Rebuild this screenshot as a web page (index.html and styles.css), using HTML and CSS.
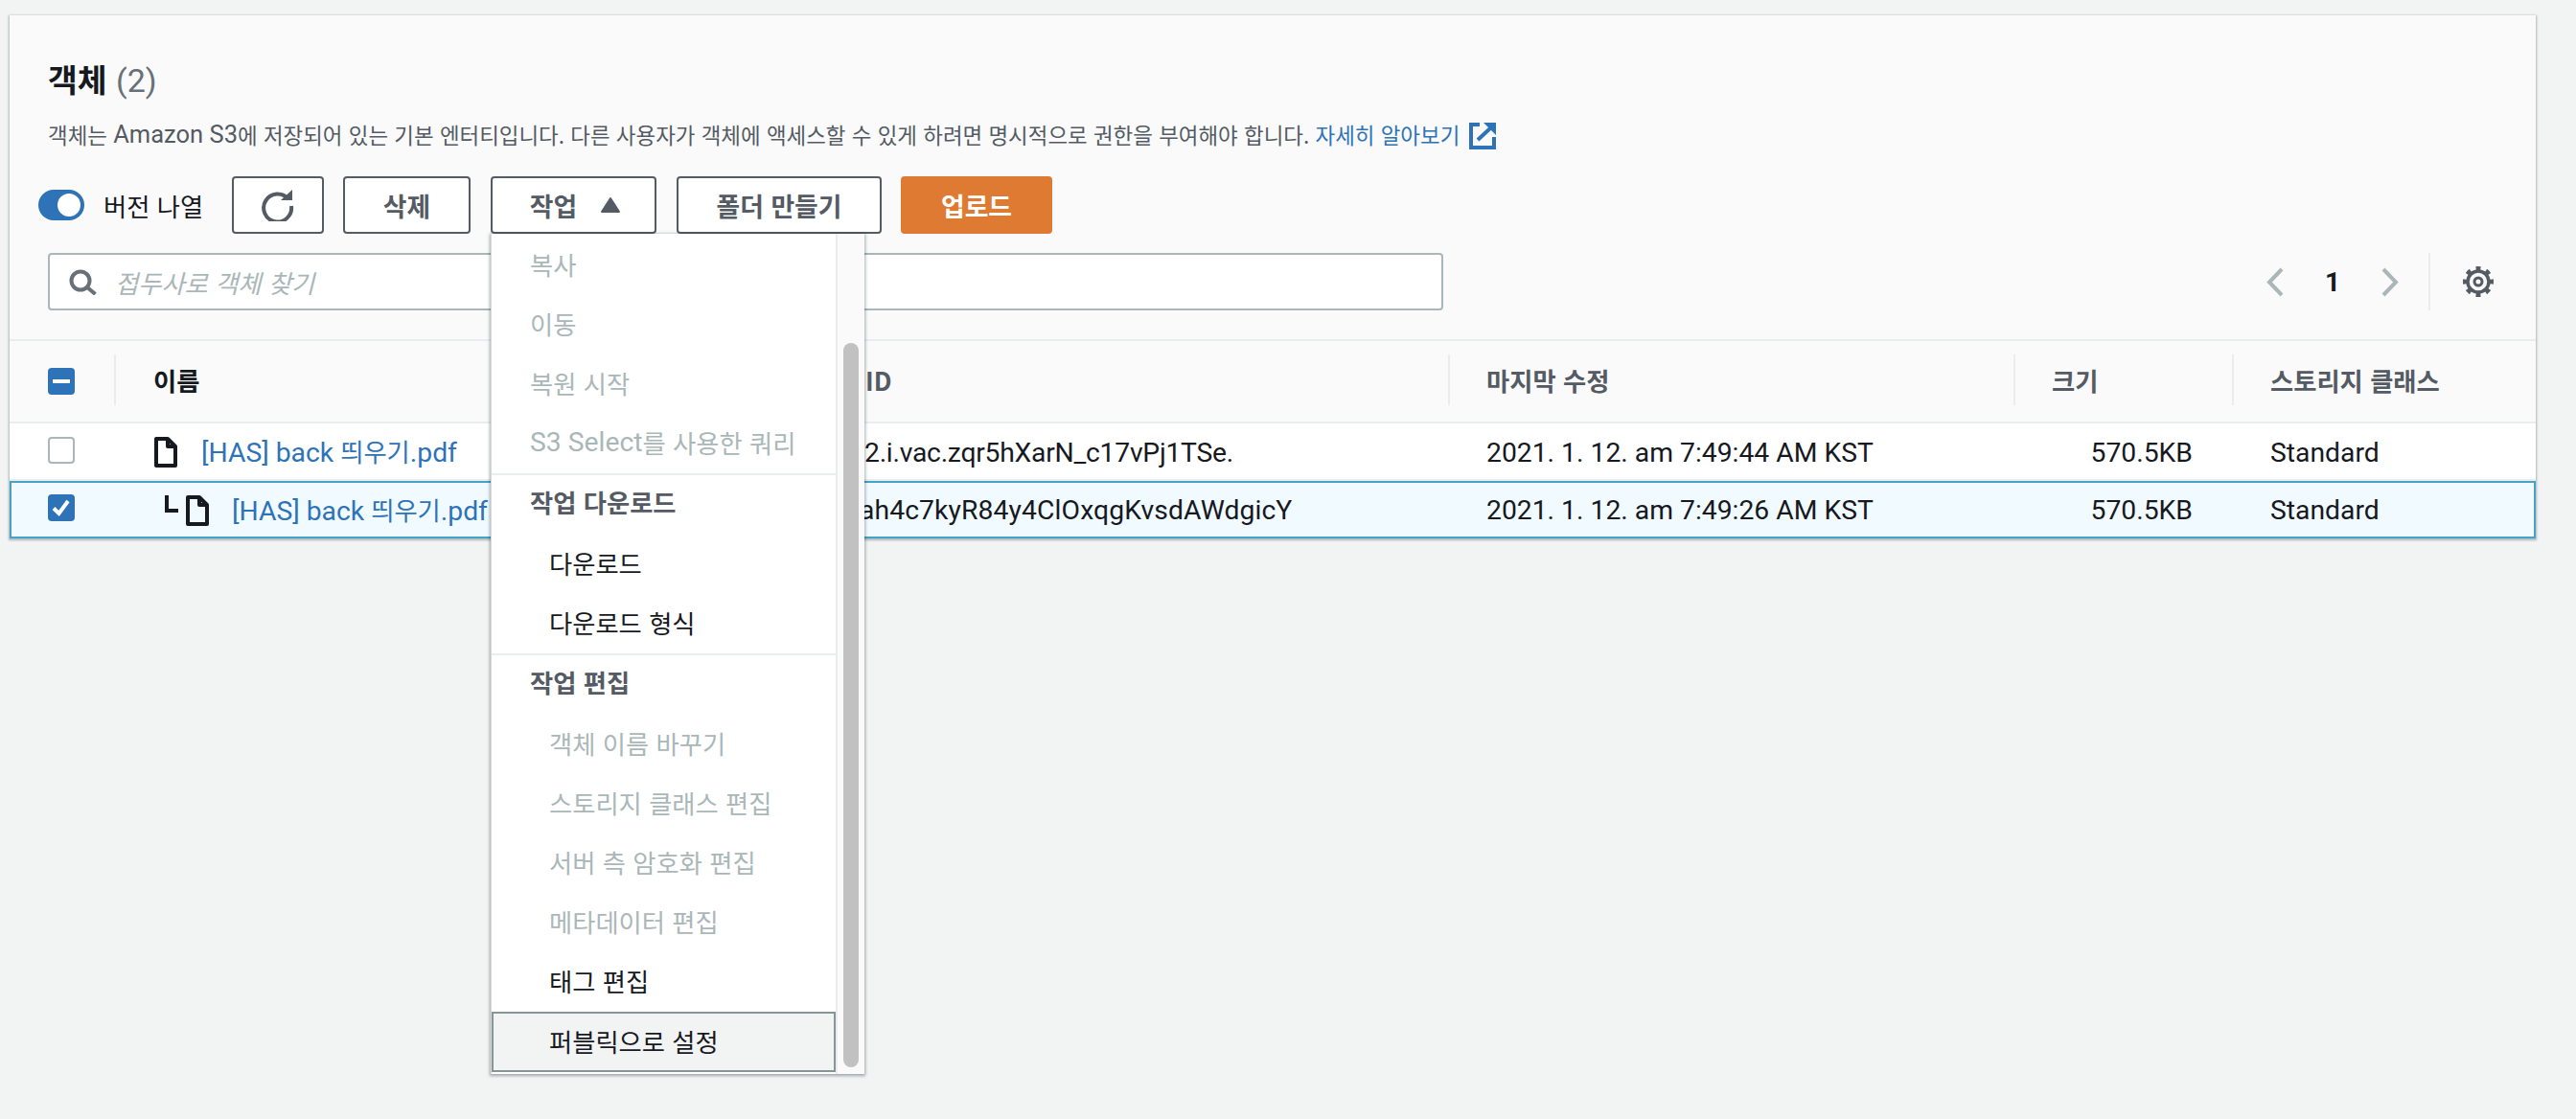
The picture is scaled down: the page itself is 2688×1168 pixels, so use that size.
FILE: index.html
```html
<!DOCTYPE html>
<html lang="ko">
<head>
<meta charset="utf-8">
<title>객체</title>
<link rel="stylesheet" href="styles.css">
</head>
<body>
<main class="card">
  <header class="head">
    <h2 class="title">객체 <span class="count">(2)</span></h2>
    <p class="desc">객체는 <span class="lat-desc">Amazon S3</span>에 저장되어 있는 기본 엔터티입니다. 다른 사용자가 객체에 액세스할 수 있게 하려면 명시적으로 권한을 부여해야 합니다. <a class="link" href="#">자세히 알아보기</a>
      <svg class="ext" viewBox="0 0 28 28"><path d="M11 2H2v24h24V15"/><path d="M9 18 22 6"/><path class="fill" d="M15 0h13v13z"/></svg>
    </p>
    <div class="toolbar">
      <label class="toggle"><span class="switch"><span class="knob"></span></span><span>버전 나열</span></label>
      <button class="btn btn-refresh"><svg class="refresh" viewBox="0 0 34 34"><path d="M28 11A14.500 14.500 0 1 0 31 18"/><path class="fill" d="M20 12h12V1z"/></svg></button>
      <button class="btn btn-delete">삭제</button>
      <div class="menu-wrap">
        <button class="btn btn-actions">작업<svg class="caret" viewBox="0 0 22 18"><path d="M11 2 20 16H2z"/></svg></button>
        <div class="dropdown">
          <ul class="menu">
            <li class="item off">복사</li>
            <li class="item off">이동</li>
            <li class="item off">복원 시작</li>
            <li class="item off"><span class="lat">S3 Select</span>를 사용한 쿼리</li>
            <li class="sep"></li>
            <li class="item group">작업 다운로드</li>
            <li class="item sub">다운로드</li>
            <li class="item sub">다운로드 형식</li>
            <li class="sep"></li>
            <li class="item group">작업 편집</li>
            <li class="item sub off">객체 이름 바꾸기</li>
            <li class="item sub off">스토리지 클래스 편집</li>
            <li class="item sub off">서버 측 암호화 편집</li>
            <li class="item sub off">메타데이터 편집</li>
            <li class="item sub">태그 편집</li>
            <li class="item sub hover">퍼블릭으로 설정</li>
          </ul>
          <div class="track"><div class="thumb"></div></div>
        </div>
      </div>
      <button class="btn btn-folder">폴더 만들기</button>
      <button class="btn btn-upload">업로드</button>
    </div>
    <div class="filter">
      <div class="search">
        <svg class="mag" viewBox="0 0 30 27"><circle cx="12" cy="12" r="9.500"/><path d="M18.500 18.500l9 7.500"/></svg>
        <span class="ph">접두사로 객체 찾기</span>
      </div>
      <div class="pager">
        <svg class="chev" viewBox="0 0 18 31"><path d="M16 2 3 15.500 16 29"/></svg>
        <span class="page">1</span>
        <svg class="chev" viewBox="0 0 18 31"><path d="M2 2 15 15.500 2 29"/></svg>
        <span class="vr"></span>
        <svg class="gear" viewBox="0 0 32 32"><circle class="teeth" cx="16" cy="16" r="14" pathLength="8"/><circle cx="16" cy="16" r="11"/><circle class="hub" cx="16" cy="16" r="4"/></svg>
      </div>
    </div>
  </header>
  <section class="table">
    <div class="row row-head">
      <div class="c-check"><span class="box on"><span class="minus"></span></span></div>
      <div class="c-name th dark">이름</div>
      <div class="c-ver th">ID</div>
      <div class="c-col th">마지막 수정</div>
      <div class="c-col th">크기</div>
      <div class="c-col th">스토리지 클래스</div>
    </div>
    <div class="row row-body">
      <div class="c-check"><span class="box"></span></div>
      <div class="c-name">
        <svg class="file" viewBox="0 0 24 32"><path d="M2 2h12l8 8v20H2z"/><path d="M14 2v8h8"/></svg>
        <a class="link" href="#"><span class="lat">[HAS] back </span>띄우기<span class="lat">.pdf</span></a>
      </div>
      <div class="c-ver lat">2.i.vac.zqr5hXarN_c17vPj1TSe.</div>
      <div class="c-col lat">2021. 1. 12. am 7:49:44 AM KST</div>
      <div class="c-col num lat">570.5KB</div>
      <div class="c-col lat">Standard</div>
    </div>
    <div class="row row-body selected">
      <div class="c-check"><span class="box on"><svg class="tick" viewBox="0 0 28 28"><path d="M6 14.500 11.500 20 21 7"/></svg></span></div>
      <div class="c-name nested">
        <svg class="elbow" viewBox="0 0 14 18"><path d="M2 0v16h12"/></svg>
        <svg class="file" viewBox="0 0 24 32"><path d="M2 2h12l8 8v20H2z"/><path d="M14 2v8h8"/></svg>
        <a class="link" href="#"><span class="lat">[HAS] back </span>띄우기<span class="lat">.pdf</span></a>
      </div>
      <div class="c-ver lat shifted">ah4c7kyR84y4ClOxqgKvsdAWdgicY</div>
      <div class="c-col lat">2021. 1. 12. am 7:49:26 AM KST</div>
      <div class="c-col num lat">570.5KB</div>
      <div class="c-col lat">Standard</div>
    </div>
  </section>
</main>
</body>
</html>
```
FILE: styles.css
```css
* { box-sizing: border-box; }
html, body { margin: 0; height: 100%; }
body {
  background: #f2f3f3;
  color: #16191f;
  font-family: "Noto Sans CJK KR", sans-serif;
  font-size: 26.300px;
  overflow: hidden;
}
.lat { font-family: Roboto, "Noto Sans CJK KR", sans-serif; font-size: 28.300px; }
.lat-desc { font-family: Roboto, "Noto Sans CJK KR", sans-serif; font-size: 25.500px; }
.card {
  margin: 16px 0 0 10px;
  width: 2636px;
  background: #fafafa;
  box-shadow: 0 1px 2px 1px rgba(0, 28, 36, 0.28);
}
.head { padding: 44px 44px 30px 40px; border-bottom: 2px solid #eaeded; height: 340px; }
.title { margin: 0; font-size: 33.500px; line-height: 44px; font-weight: 700; }
.count { font: 400 34px Roboto, sans-serif; color: #687078; }
.desc { margin: 16px 0 0; font-size: 22.450px; line-height: 40px; color: #545b64; display: flex; align-items: center; white-space: pre; }
.link { color: #2e73b8; text-decoration: none; }
.ext { width: 28px; height: 28px; margin-left: 10px; margin-top: 4px; fill: none; stroke: #2e73b8; stroke-width: 4; }
.ext .fill { fill: #2e73b8; stroke: none; }
.toolbar { margin: 24px 0 0 -10px; display: flex; align-items: center; height: 60px; }
.toggle { display: flex; align-items: center; gap: 20px; width: 202px; }
.switch { width: 48px; height: 32px; border-radius: 16px; background: #2e73b8; display: flex; align-items: center; padding-left: 20px; }
.knob { width: 24px; height: 24px; border-radius: 50%; background: #fff; }
.btn {
  height: 60px;
  border: 2px solid #545b64;
  border-radius: 4px;
  background: #fff;
  color: #545b64;
  font: 700 26.800px "Noto Sans CJK KR", sans-serif;
  padding: 0;
  display: flex;
  align-items: center;
  justify-content: center;
}
.btn-refresh { width: 96px; }
.btn-delete { width: 133px; margin-left: 20px; }
.menu-wrap { position: relative; margin-left: 21px; }
.btn-actions { width: 173px; gap: 24px; padding-left: 4px; }
.btn-folder { width: 214px; margin-left: 21px; }
.btn-upload { width: 158px; margin-left: 20px; background: #df7a33; border: 0; color: #fff; }
.refresh { width: 34px; height: 34px; fill: none; stroke: #545b64; stroke-width: 4; }
.refresh .fill { fill: #545b64; stroke: none; }
.caret { width: 22px; height: 18px; fill: #545b64; stroke: #545b64; stroke-width: 2; stroke-linejoin: round; }
.dropdown {
  position: absolute;
  top: 100%;
  left: 0;
  z-index: 5;
  width: 390px;
  height: 877px;
  display: flex;
  background: #fff;
  border-left: 1px solid #d5dbdb;
  box-shadow: 0 1px 3px 1px rgba(0, 28, 36, 0.35);
}
.menu { list-style: none; margin: 0; padding: 2px 0 0; width: 359px; flex: none; }
.item { height: 62px; padding: 0 0 3px 40px; display: flex; align-items: center; white-space: pre; }
.sub { padding-left: 60px; }
.off { color: #aab7b8; }
.group { color: #545b64; font-weight: 700; padding-bottom: 7px; }
.sep { height: 2px; background: #eaeded; }
.hover { background: #f2f3f3; box-shadow: inset 0 0 0 2px #879596; height: 63px; }
.track { flex: 1; background: #fafafa; border-left: 2px solid #eaeded; padding: 114px 0 0 6px; }
.thumb { width: 16px; height: 756px; border-radius: 8px; background: #c1c1c1; }
.filter { margin-top: 20px; display: flex; align-items: center; height: 60px; }
.search {
  width: 1456px;
  height: 60px;
  background: #fff;
  border: 2px solid #aab7b8;
  border-radius: 4px;
  padding-left: 20px;
  display: flex;
  align-items: center;
  gap: 18px;
}
.mag { width: 30px; height: 27px; fill: none; stroke: #687078; stroke-width: 4; }
.ph { color: #aab7b8; font-style: italic; }
.pager { margin-left: auto; display: flex; align-items: center; }
.chev { width: 18px; height: 31px; fill: none; stroke: #aab7b8; stroke-width: 4; }
.page { width: 102px; text-align: center; font: 700 28px Roboto, sans-serif; }
.vr { width: 2px; height: 60px; background: #eaeded; margin: 0 34px 0 31px; }
.gear { width: 32px; height: 32px; fill: none; stroke: #545b64; stroke-width: 3.500; }
.teeth { stroke-width: 4; stroke-dasharray: 0.45 0.55; stroke-dashoffset: 0.225; }
.hub { stroke-width: 3; }
.row { display: grid; grid-template-columns: 109px 780px 612px 590px 228px 317px; align-items: center; }
.row-head { height: 86px; background: #fafafa; border-bottom: 2px solid #eaeded; padding-bottom: 3px; }
.row-head .c-check { margin-top: 3px; }
.row-body { height: 60px; background: #fff; border-bottom: 2px solid #eaeded; padding-top: 2px; }
.row-body .c-check { margin-bottom: 4px; }
.selected { background: #f1faff; border-bottom: 0; box-shadow: inset 0 0 0 2px #44a3c8; padding-top: 1px; }
.selected .c-check { margin-bottom: 5px; }
.c-check { padding-left: 40px; display: flex; align-items: center; }
.box { width: 28px; height: 28px; border-radius: 4px; border: 2px solid #aab7b8; background: #fff; display: flex; align-items: center; justify-content: center; }
.box.on { background: #2e73b8; border: 0; }
.minus { width: 18px; height: 4px; background: #fff; }
.tick { width: 28px; height: 28px; fill: none; stroke: #fff; stroke-width: 4; }
.c-name { padding-left: 42px; display: flex; align-items: center; gap: 25px; white-space: pre; }
.c-name .link { margin-bottom: 3px; }
.th.c-name { padding-left: 41px; }
.nested { padding-left: 53px; gap: 8px; }
.nested .link { margin-left: 16px; }
.file { width: 24px; height: 32px; fill: none; stroke: #16191f; stroke-width: 4; stroke-linejoin: round; }
.elbow { width: 14px; height: 18px; margin-bottom: 14px; fill: none; stroke: #16191f; stroke-width: 4; }
.c-ver { padding-left: 3px; white-space: nowrap; letter-spacing: -0.250px; }
.c-ver.shifted { padding-left: 0; margin-left: -2px; letter-spacing: 0.100px; }
.th { font-weight: 700; color: #545b64; }
.c-ver.th { padding-left: 4px; letter-spacing: 0; }
.dark { color: #16191f; }
.c-col { padding-left: 40px; white-space: nowrap; }
.num { text-align: right; padding: 0 41px 0 0; }
.row-head .c-col, .row-head .c-name { position: relative; }
.row-head .c-col::before, .row-head .c-name::before {
  content: "";
  position: absolute;
  left: 0;
  top: -7px;
  bottom: -7px;
  width: 2px;
  background: #eaeded;
}
```
